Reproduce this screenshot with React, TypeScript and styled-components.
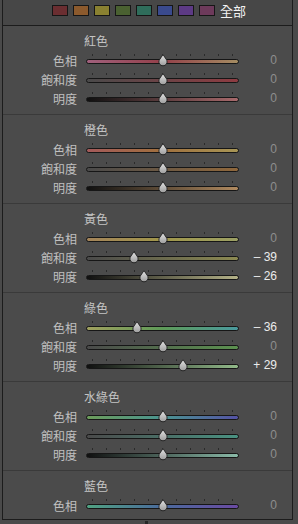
import React from "react";
import styled, { createGlobalStyle } from "styled-components";

const Global = createGlobalStyle`
  html, body { margin: 0; padding: 0; background: #4a4a4a; }
  body { width: 298px; height: 524px; overflow: hidden; }
`;

const Page = styled.div`
  padding-left: 2px;
  width: 298px;
  height: 524px;
  box-sizing: border-box;
  background: #4a4a4a;
  font-family: "Noto Sans CJK TC", "Noto Sans CJK SC", sans-serif;
`;

const Frame = styled.div`
  width: 291px;
  height: 520px;
  box-sizing: border-box;
  border-left: 1px solid #1c1c1c;
  border-right: 1px solid #1c1c1c;
  border-bottom: 1px solid #1c1c1c;
  background: #4b4b4b;
  overflow: hidden;
`;

const TopBar = styled.div`
  height: 26px;
  box-sizing: border-box;
  border-bottom: 1px solid #1c1c1c;
  background: #474747;
  display: flex;
  align-items: flex-start;
  gap: 5px;
  padding: 5px 0 0 49px;
`;

const Swatch = styled.div<{ $c: string }>`
  width: 16px;
  height: 11px;
  box-sizing: border-box;
  border: 1px solid #161616;
  background: ${(p) => p.$c};
`;

const AllLabel = styled.div`
  color: #f2f2f2;
  font-size: 13px;
  line-height: 11px;
`;

const Section = styled.div`
  height: 89px;
  box-sizing: border-box;
  border-bottom: 1px solid #3a3a3a;
  padding-top: 8px;
`;

const Title = styled.div`
  height: 14px;
  line-height: 14px;
  font-size: 12px;
  color: #c4c4c4;
  padding-left: 81px;
  margin-bottom: 3px;
`;

const Row = styled.div`
  display: grid;
  grid-template-columns: 74px 153px 1fr;
  column-gap: 9px;
  align-items: center;
  height: 19px;
`;

const Label = styled.div`
  text-align: right;
  font-size: 12px;
  line-height: 19px;
  color: #c0c0c0;
`;

const Track = styled.div<{ $bg: string }>`
  position: relative;
  height: 5px;
  margin-top: 2px;
  box-sizing: border-box;
  border: 1px solid #161616;
  border-radius: 2.5px;
  background: ${(p) => p.$bg};
  &::before {
    content: "";
    position: absolute;
    left: 5px;
    top: -6px;
    width: 141px;
    height: 2px;
    background: repeating-linear-gradient(
      to right,
      #2a2a2a 0 1px,
      transparent 1px 14px
    );
  }
`;

const Thumb = styled.svg`
  position: absolute;
  top: -6px;
  width: 10px;
  height: 11px;
  overflow: visible;
`;

const Value = styled.div<{ $active: boolean }>`
  text-align: right;
  padding-right: 15px;
  font-family: "Liberation Sans", Arial, sans-serif;
  font-size: 12px;
  line-height: 19px;
  color: ${(p) => (p.$active ? "#ececec" : "#8e8e8e")};
`;

const BottomMark = styled.div`
  width: 3px;
  height: 3px;
  margin: 1px 0 0 143px;
  background: #262626;
`;

type Sec = {
  title: string;
  bgs: string[];
  values: number[];
};

const sections: Sec[] = [
  {
    title: "紅色",
    bgs: [
      "linear-gradient(to right, #a0607c, #94404a 50%, #a48c62)",
      "linear-gradient(to right, #4a4a4a, #8e3c42)",
      "linear-gradient(to right, #101010, #a86a6c)",
    ],
    values: [0, 0, 0],
  },
  {
    title: "橙色",
    bgs: [
      "linear-gradient(to right, #a45a5a, #a0703e 50%, #a89656)",
      "linear-gradient(to right, #4a4a4a, #90683c)",
      "linear-gradient(to right, #101010, #b08a60)",
    ],
    values: [0, 0, 0],
  },
  {
    title: "黃色",
    bgs: [
      "linear-gradient(to right, #a4845a, #a0964a 50%, #9ca064)",
      "linear-gradient(to right, #4a4a4a, #8c8a52)",
      "linear-gradient(to right, #101010, #b4b288)",
    ],
    values: [0, -39, -26],
  },
  {
    title: "綠色",
    bgs: [
      "linear-gradient(to right, #a0a05e, #5e9a58 50%, #4a9a9e)",
      "linear-gradient(to right, #4a4a4a, #5c9250)",
      "linear-gradient(to right, #101010, #92ba8a)",
    ],
    values: [-36, 0, 29],
  },
  {
    title: "水綠色",
    bgs: [
      "linear-gradient(to right, #6c9c5a, #4a9490 50%, #5452a4)",
      "linear-gradient(to right, #4a4a4a, #4a9282)",
      "linear-gradient(to right, #101010, #8abaa8)",
    ],
    values: [0, 0, 0],
  },
  {
    title: "藍色",
    bgs: ["linear-gradient(to right, #50a282, #4a6a9c 50%, #6a4aa2)"],
    values: [0],
  },
];

const swatches = [
  "#6b2e31",
  "#8c5a2d",
  "#8a8131",
  "#4a6131",
  "#2f6d5b",
  "#3a4a8d",
  "#5d3a85",
  "#6d3a5b",
];

const labels = ["色相", "飽和度", "明度"];

function fmt(v: number) {
  if (v < 0) return `– ${Math.abs(v)}`;
  if (v > 0) return `+ ${v}`;
  return "0";
}

function SliderThumb({ value }: { value: number }) {
  const left = 76.5 + value * 0.72 - 5 - 1;
  return (
    <Thumb viewBox="0 0 10 11" style={{ left }}>
      <defs>
        <linearGradient id="tg" x1="0" y1="0" x2="0" y2="1">
          <stop offset="0" stopColor="#e4e4e4" />
          <stop offset="1" stopColor="#9c9c9c" />
        </linearGradient>
      </defs>
      <path
        d="M5 0.6 L8.8 6.2 A4.1 4.1 0 1 1 1.2 6.2 Z"
        fill="url(#tg)"
        stroke="#1e1e1e"
        strokeWidth="0.9"
        strokeLinejoin="round"
      />
    </Thumb>
  );
}

export default function App() {
  return (
    <>
      <Global />
      <Page>
        <Frame>
          <TopBar>
            {swatches.map((c) => (
              <Swatch key={c} $c={c} />
            ))}
            <AllLabel>全部</AllLabel>
          </TopBar>
          {sections.map((s) => (
            <Section key={s.title}>
              <Title>{s.title}</Title>
              {s.values.map((v, i) => (
                <Row key={i}>
                  <Label>{labels[i]}</Label>
                  <Track $bg={s.bgs[i]}>
                    <SliderThumb value={v} />
                  </Track>
                  <Value $active={v !== 0}>{fmt(v)}</Value>
                </Row>
              ))}
            </Section>
          ))}
        </Frame>
        <BottomMark />
      </Page>
    </>
  );
}
